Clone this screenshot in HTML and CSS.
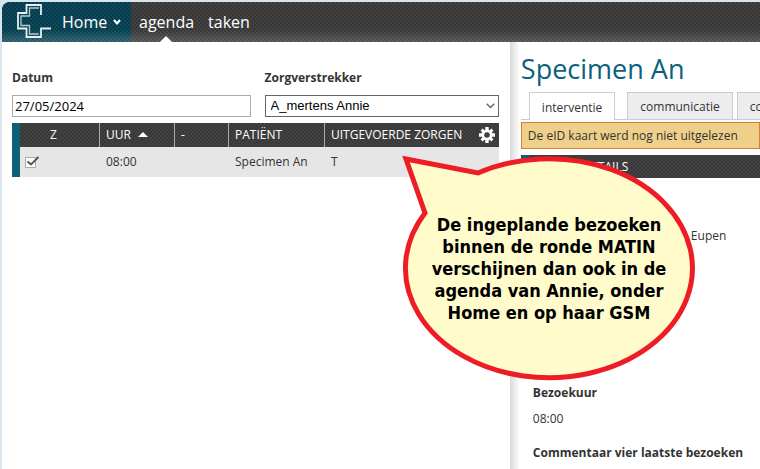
FILE: index.html
```html
<!DOCTYPE html>
<html lang="nl">
<head>
    <meta charset="UTF-8">
    <meta name="viewport" content="width=device-width, initial-scale=1.0">
    <title>Agenda</title>
    <link rel="stylesheet" href="styles.css">
</head>
<body>
    <div class="app">
        <header class="topbar">
            <button class="home-btn">
                <svg class="logo" width="36" height="36" viewBox="0 0 36 36" fill="none">
                    <path d="M25 11V1H10.500V9H2V24.500H10.500V33H25V24.500H35" stroke="#e6eff1" stroke-width="1.800"/>
                    <path d="M23 4H13.500V12H5V21.500H13.500V30H22.500" stroke="#b4cbd2" stroke-width="1.300"/>
                </svg>
                <span>Home</span>
                <svg class="chevron" width="8" height="8" viewBox="0 0 8 8" fill="none">
                    <path d="M1 2L4 5.500L7 2" stroke="#fff" stroke-width="2"/>
                </svg>
            </button>
            <nav class="menu">
                <a href="#" class="active">agenda</a>
                <a href="#">taken</a>
            </nav>
        </header>

        <main class="content">
            <section class="agenda">
                <form class="filters">
                    <div class="field date-field">
                        <label for="datum">Datum</label>
                        <input type="text" id="datum" value="27/05/2024">
                    </div>
                    <div class="field">
                        <label for="zorg">Zorgverstrekker</label>
                        <div class="select-box">
                            <select id="zorg">
                                <option>A_mertens Annie</option>
                            </select>
                            <svg width="9" height="6" viewBox="0 0 9 6" fill="none">
                                <path d="M0.700 0.700L4.500 4.500L8.300 0.700" stroke="#666" stroke-width="1.400"/>
                            </svg>
                        </div>
                    </div>
                </form>

                <table class="visits">
                    <thead>
                        <tr>
                            <th class="col-z">Z</th>
                            <th class="col-uur">UUR <span class="sort"></span></th>
                            <th class="col-dash">-</th>
                            <th class="col-patient">PATIËNT</th>
                            <th>
                                <div class="last-head">
                                    <span>UITGEVOERDE ZORGEN</span>
                                    <button class="gear" aria-label="Instellingen">
                                        <svg width="16" height="16" viewBox="0 0 16 16">
                                            <g stroke="#fff" stroke-width="3.400">
                                                <path d="M8 0V16M0 8H16"/>
                                                <path d="M2.600 2.600L13.400 13.400M13.400 2.600L2.600 13.400" stroke-width="3"/>
                                            </g>
                                            <circle cx="8" cy="8" r="5.400" fill="#fff"/>
                                            <circle cx="8" cy="8" r="2.800" fill="#3d3d3d"/>
                                        </svg>
                                    </button>
                                </div>
                            </th>
                        </tr>
                    </thead>
                    <tbody>
                        <tr>
                            <td class="check-cell">
                                <label class="check">
                                    <input type="checkbox" checked aria-label="Z">
                                    <svg width="15" height="13" viewBox="0 0 15 13" fill="none">
                                        <rect x="0.500" y="1.500" width="10" height="10" fill="#fff" stroke="#aaa"/>
                                        <path d="M2.500 5.500L6 8.500L13.500 1" stroke="#555" stroke-width="2"/>
                                    </svg>
                                </label>
                            </td>
                            <td>08:00</td>
                            <td></td>
                            <td>Specimen An</td>
                            <td>T</td>
                        </tr>
                    </tbody>
                </table>
            </section>

            <section class="detail">
                <h1>Specimen An</h1>
                <div class="tabs">
                    <button class="tab selected">interventie</button>
                    <button class="tab">communicatie</button>
                    <button class="tab">contact</button>
                </div>
                <div class="warning">De eID kaart werd nog niet uitgelezen</div>
                <h2>BEZOEKDETAILS</h2>
                <div class="info">
                    <p class="address">Eupen</p>
                    <h3>Bezoekuur</h3>
                    <p>08:00</p>
                    <h3>Commentaar vier laatste bezoeken</h3>
                </div>
            </section>
        </main>

        <div class="callout">
            <svg width="294" height="228" viewBox="0 0 294 228">
                <path d="M4 5L76 19A143.500 109.500 0 1 1 23 59Z" fill="#fffbcb" stroke="#ee1c24" stroke-width="5"/>
            </svg>
            <p>De ingeplande bezoeken<br>binnen de ronde MATIN<br>verschijnen dan ook in de<br>agenda van Annie, onder<br>Home en op haar GSM</p>
        </div>
    </div>
</body>
</html>
```

FILE: styles.css
```css
* {
    margin: 0;
    padding: 0;
    box-sizing: border-box;
}

body {
    font-family: 'Open Sans', 'Noto Sans', sans-serif;
    font-size: 12px;
    line-height: 16px;
    color: #333;
    background: #d9e4ed;
}

button {
    font: inherit;
    color: inherit;
    border: none;
    background: none;
    cursor: pointer;
}

.app {
    position: relative;
    min-height: 100vh;
    padding: 2px 0 0 2px;
    display: flex;
    flex-direction: column;
    overflow: hidden;
}

.topbar {
    display: flex;
    height: 40px;
    border-radius: 8px 0 0 0;
    overflow: hidden;
    font-size: 16px;
    color: #fff;
    background: linear-gradient(transparent 70%, rgba(255,255,255,0.16)),
        conic-gradient(#363636 25%, #434343 0 50%, #363636 0 75%, #434343 0) 0 0 / 4px 4px;
}

.home-btn {
    display: flex;
    align-items: center;
    width: 129px;
    padding-left: 14px;
    background: linear-gradient(transparent 70%, rgba(255,255,255,0.18)),
        conic-gradient(#0a3a49 25%, #0b4b60 0 50%, #0a3a49 0 75%, #0b4b60 0) 0 0 / 4px 4px;
}

.home-btn span {
    margin: 0 6px 0 10px;
}

.menu {
    display: flex;
    gap: 14px;
    padding-left: 8px;
}

.menu a {
    position: relative;
    color: #fff;
    line-height: 41px;
    text-decoration: none;
}

.menu a.active::after {
    content: '';
    position: absolute;
    left: 50%;
    bottom: 0;
    margin-left: -7px;
    border: 6px solid transparent;
    border-top: none;
    border-bottom-color: #fff;
}

.content {
    flex: 1;
    display: flex;
    background: #fff;
}

.agenda {
    flex: 0 0 67%;
    padding: 28px 11px 0 10px;
}

.filters {
    display: flex;
    gap: 14px;
    margin-bottom: 6px;
}

.field {
    flex: 1;
}

.date-field {
    flex: 0 0 49%;
}

.field label {
    display: block;
    margin-bottom: 9px;
    font-weight: bold;
}

.field input,
.field select {
    display: block;
    width: 100%;
    height: 22px;
    padding: 0 2px;
    border: 1px solid #aaa;
    background: #fff;
    color: #000;
    font: inherit;
    font-size: 13px;
}

.field select {
    appearance: none;
    padding: 0 5px;
    border-color: #666;
    font-family: 'Liberation Sans', Arial, sans-serif;
}

.select-box {
    position: relative;
}

.select-box svg {
    position: absolute;
    right: 4px;
    top: 8px;
    pointer-events: none;
}

.visits {
    width: 100%;
    table-layout: fixed;
    border-collapse: separate;
    border-spacing: 0;
    border-left: 8px solid #0c6078;
    white-space: nowrap;
}

.visits th {
    height: 24px;
    padding-left: 6px;
    border-left: 1px solid #aaa;
    color: #fff;
    font-size: 12px;
    font-weight: normal;
    text-align: left;
}

.visits thead,
.detail h2 {
    background: conic-gradient(#383838 25%, #424242 0 50%, #383838 0 75%, #424242 0) 0 0 / 4px 4px;
}

.visits th.col-z {
    width: 79px;
    padding-left: 30px;
    border-left: none;
}

.col-uur {
    width: 75px;
}

.col-dash {
    width: 54px;
}

.col-patient {
    width: 96px;
}

.sort {
    display: inline-block;
    margin-left: 4px;
    border: 5px solid transparent;
    border-top: none;
    border-bottom-color: #fff;
    vertical-align: 2px;
}

.last-head {
    display: flex;
    align-items: center;
    justify-content: space-between;
    padding-right: 4px;
}

.gear,
.gear svg {
    display: block;
}

.visits td {
    height: 30px;
    padding-left: 7px;
    background: #e6e6e6;
}

.visits .check-cell {
    padding-left: 5px;
}

.check {
    display: block;
    position: relative;
    width: 15px;
    height: 13px;
}

.check input {
    position: absolute;
    opacity: 0;
}

.check svg {
    display: block;
}

.detail {
    flex: 1;
    min-width: 0;
    padding: 7px 0 0 11px;
    overflow: hidden;
    background: linear-gradient(90deg, #dadada, #fff 10px);
}

.detail h1 {
    margin-bottom: 4px;
    color: #0c5f7e;
    font-size: 27px;
    font-weight: normal;
    line-height: 39px;
}

.tabs {
    display: flex;
    height: 28px;
    padding-left: 8px;
    border-bottom: 1px solid #ccc;
}

.tab {
    flex: none;
    height: 27px;
    margin-right: 4px;
    padding: 2px 12px 0;
    border: 1px solid #ccc;
    border-bottom: none;
    background: #ededed;
}

.tab.selected {
    height: 28px;
    margin-right: 12px;
    background: #fff;
}

.warning {
    margin: 2px 0 6px;
    padding: 5px 6px 4px;
    border: 1px solid #d87c3c;
    background: #efd08a;
    white-space: nowrap;
}

.detail h2 {
    height: 23px;
    padding-left: 9px;
    border-left: 8px solid #0c6078;
    color: #fff;
    font-size: 12px;
    font-weight: normal;
    line-height: 24px;
}

.info {
    padding: 50px 0 0 12px;
    white-space: nowrap;
}

.info p {
    line-height: 16px;
    margin-bottom: 18px;
}

.info .address {
    margin-bottom: 141px;
    padding-left: 158px;
}

.info h3 {
    margin-bottom: 10px;
    font-size: 12px;
    line-height: 16px;
}

/* speech balloon over both panes */
.callout {
    position: absolute;
    left: 402px;
    top: 154px;
    width: 294px;
    color: #000;
}

.callout svg {
    display: block;
}

.callout p {
    position: absolute;
    top: 60px;
    left: 0;
    width: 100%;
    font-family: 'DejaVu Sans Condensed', 'DejaVu Sans', sans-serif;
    font-size: 18px;
    font-weight: bold;
    line-height: 22px;
    text-align: center;
    white-space: nowrap;
}
```
